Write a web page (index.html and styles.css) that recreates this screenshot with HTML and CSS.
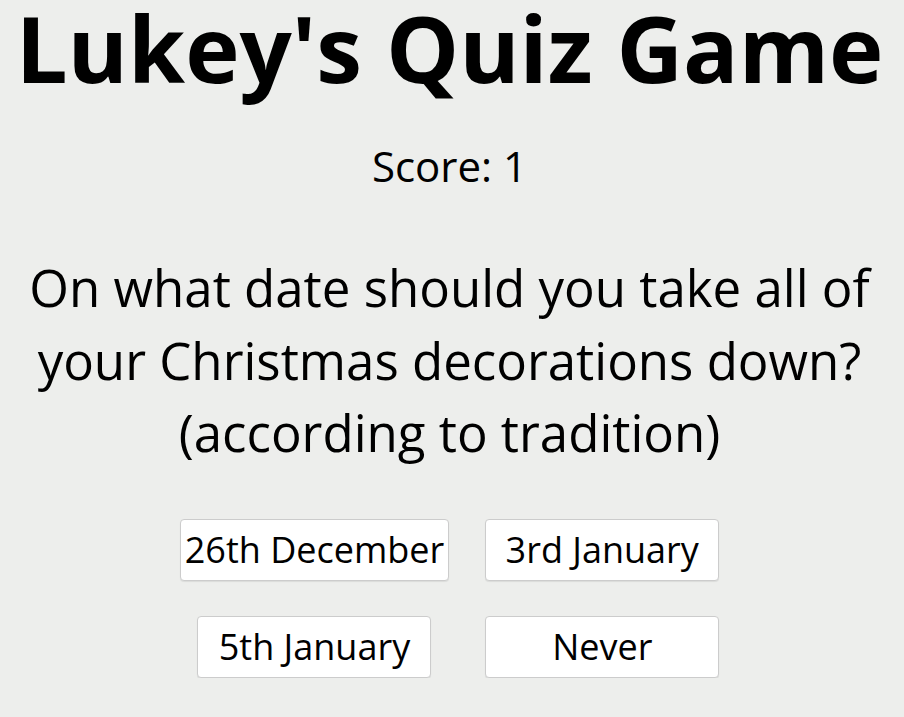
FILE: index.html
```html
<!DOCTYPE html>
<html lang="en">
<head>
  <meta charset="UTF-8" />
  <title>Lukey's Quiz Game</title>
  <link rel="stylesheet" href="styles.css">
</head>
<body>

  <h1 class="title">Lukey's Quiz Game</h1>
  <p class="score">Score: <span id="score">1</span></p>

  <div class="quiz">
    <p class="question" id="question">On what date should you take all of your Christmas decorations down? (according to tradition)</p>
    <div class="answers" id="answers">
      <button class="answer">26th December</button>
      <button class="answer">3rd January</button>
      <button class="answer">5th January</button>
      <button class="answer">Never</button>
    </div>
  </div>

</body>
</html>
```

FILE: styles.css
```css
body {
  margin: 0;
  padding: 0 11px 0 6px;
  font-family: 'Segoe UI', 'Open Sans', sans-serif;
  background-color: #edeeec;
  color: #000;
  text-align: center;
}

.title {
  margin: 0;
  font-size: 92px;
  font-weight: bold;
  line-height: 96px;
}

.score {
  margin: 45px 0 0;
  font-size: 42px;
  line-height: 50px;
}

.question {
  margin: 60px 0 0;
  font-size: 51px;
  line-height: 72.5px;
}

.answers {
  display: grid;
  grid-template-columns: auto auto;
  justify-content: center;
  justify-items: center;
  gap: 35px 36px;
  margin-top: 50px;
}

.answer {
  min-width: 234px;
  height: 62px;
  padding: 0 4px;
  background-color: #fff;
  border: 1px solid #cccccc;
  border-radius: 4px;
  box-shadow: 0 1px 1px rgba(0, 0, 0, 0.08);
  font-family: inherit;
  font-size: 36px;
  color: #000;
  cursor: pointer;
}

.answer:hover {
  background-color: #f4f4f4;
}
```
